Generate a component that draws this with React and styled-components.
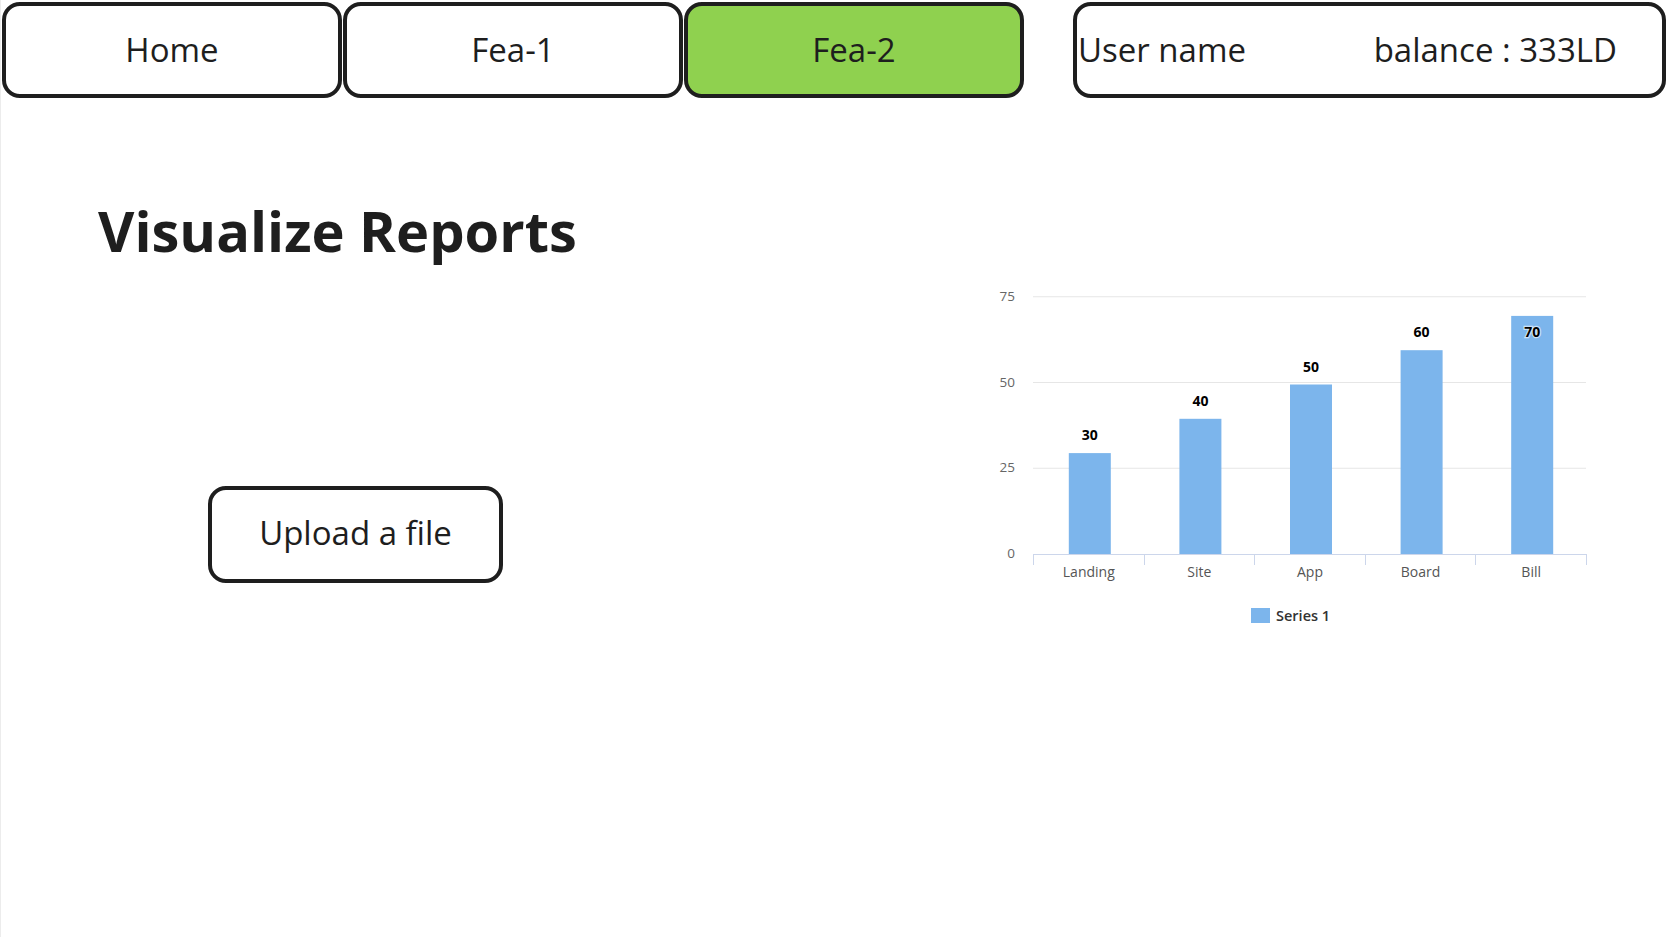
import React from "react";
import styled, { createGlobalStyle } from "styled-components";

const GlobalStyle = createGlobalStyle`
  html, body { margin: 0; padding: 0; background: #ffffff; }
  body { font-family: "Open Sans", "Noto Sans", sans-serif; color: #1e1e1e; }
`;

const Page = styled.div`
  width: 1666px;
  height: 937px;
  box-sizing: border-box;
  border-left: 1px solid #ececec;
  display: flex;
  flex-direction: column;
  overflow: hidden;
`;

const Header = styled.header`
  display: flex;
  align-items: stretch;
  padding: 2px 0 0 1px;
  height: 96px;
`;

const NavGroup = styled.nav`
  display: flex;
  gap: 1px;
`;

const NavButton = styled.button`
  width: 340px;
  height: 96px;
  box-sizing: border-box;
  border: 4px solid #1e1e1e;
  border-radius: 18px;
  background: ${(p) => (p.$active ? "#8fd14f" : "#ffffff")};
  font-family: "Open Sans", sans-serif;
  font-size: 33px;
  color: #1e1e1e;
  display: flex;
  align-items: center;
  justify-content: center;
  padding: 0 0 1px;
  cursor: pointer;
`;

const UserBox = styled.div`
  margin-left: 49px;
  flex: 1;
  box-sizing: border-box;
  border: 4px solid #1e1e1e;
  border-radius: 18px;
  display: flex;
  align-items: center;
  justify-content: space-between;
  padding: 0 45px 1px 1px;
  font-size: 33px;
`;

const Main = styled.main`
  display: flex;
  flex: 1;
`;

const LeftPane = styled.section`
  display: flex;
  flex-direction: column;
  align-items: flex-start;
  padding: 98px 0 0 97px;
`;

const Title = styled.h1`
  margin: 0;
  font-family: "Open Sans", sans-serif;
  font-weight: 700;
  font-size: 56px;
  line-height: 68px;
  color: #1e1e1e;
`;

const UploadButton = styled.button`
  margin: 222px 0 0 110px;
  width: 295px;
  height: 97px;
  box-sizing: border-box;
  border: 4px solid #1e1e1e;
  border-radius: 18px;
  background: #ffffff;
  font-family: "Open Sans", sans-serif;
  font-size: 33px;
  color: #1e1e1e;
  padding: 0 0 4px;
  cursor: pointer;
`;

const ChartPane = styled.section`
  margin-left: auto;
  margin-right: 56px;
  padding-top: 182px;
`;

const data = [
  { name: "Landing", value: 30 },
  { name: "Site", value: 40 },
  { name: "App", value: 50 },
  { name: "Board", value: 60 },
  { name: "Bill", value: 70 },
];

const X0 = 43;
const X1 = 596;
const Y0 = 274;
const PX = 3.43;
const catW = (X1 - X0) / data.length;
const y = (v) => Y0 - v * PX;

function BarChart() {
  return (
    <svg width="620" height="360" viewBox="0 0 620 360" fontFamily="'Open Sans', sans-serif">
      {[0, 25, 50, 75].map((t) => (
        <g key={t}>
          {t !== 0 && (
            <line x1={X0} x2={X1} y1={y(t)} y2={y(t)} stroke="#e6e6e6" strokeWidth="1" />
          )}
          <text x="25" y={y(t) + 4} fontSize="13.5" fill="#666" textAnchor="end">
            {t}
          </text>
        </g>
      ))}
      <line x1={X0} x2={X1} y1={Y0 + 0.5} y2={Y0 + 0.5} stroke="#ccd6eb" strokeWidth="1" />
      {data.map((d, i) => {
        const cx = X0 + catW * (i + 0.5) + 1.5;
        const top = y(d.value) + 2;
        const inside = top < 40;
        return (
          <g key={d.name}>
            <rect x={cx - 21} y={top} width="42" height={Y0 - top} fill="#7cb5ec" />
            <text
              x={cx}
              y={inside ? top + 21 : top - 13}
              fontSize="14"
              fontWeight="700"
              fill="#000"
              textAnchor="middle"
              stroke="#ffffff"
              strokeWidth="2.5"
              strokeOpacity={inside ? 0.6 : 0}
              paintOrder="stroke"
            >
              {d.value}
            </text>
            <text x={cx - 1} y={Y0 + 23} fontSize="14" fill="#555" textAnchor="middle">
              {d.name}
            </text>
          </g>
        );
      })}
      {Array.from({ length: data.length + 1 }).map((_, i) => {
        const x = Math.round(X0 + catW * i) + 0.5;
        return <line key={i} x1={x} x2={x} y1={Y0} y2={Y0 + 11} stroke="#ccd6eb" strokeWidth="1" />;
      })}
      <rect x="261" y="328" width="19" height="15" fill="#7cb5ec" />
      <text x="286" y="341" fontSize="14.5" fontWeight="600" fill="#333">
        Series 1
      </text>
    </svg>
  );
}

export default function App() {
  return (
    <>
      <GlobalStyle />
      <Page>
        <Header>
          <NavGroup>
            <NavButton>Home</NavButton>
            <NavButton>Fea-1</NavButton>
            <NavButton $active>Fea-2</NavButton>
          </NavGroup>
          <UserBox>
            <span>User name</span>
            <span>balance : 333LD</span>
          </UserBox>
        </Header>
        <Main>
          <LeftPane>
            <Title>Visualize Reports</Title>
            <UploadButton>Upload a file</UploadButton>
          </LeftPane>
          <ChartPane>
            <BarChart />
          </ChartPane>
        </Main>
      </Page>
    </>
  );
}
